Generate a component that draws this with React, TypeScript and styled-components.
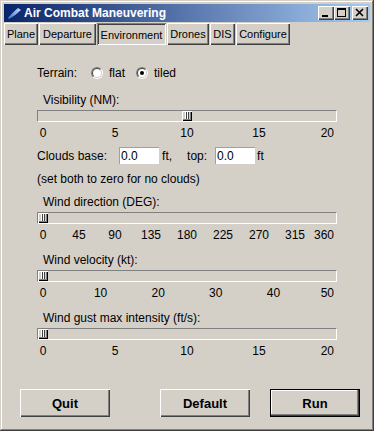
import React from 'react';
import styled, { createGlobalStyle, css } from 'styled-components';

const GlobalStyle = createGlobalStyle`
  html, body {
    margin: 0;
    padding: 0;
    background: #d4d0c8;
  }
  body {
    font-family: "Liberation Sans", Arial, sans-serif;
    font-size: 12px;
    color: #000;
  }
`;

const raised = css`
  box-shadow: inset 1px 1px #ffffff, inset -1px -1px #404040, inset -2px -2px #808080;
`;

const sunken = css`
  box-shadow: inset 1px 1px #808080, inset -1px -1px #ffffff, inset 2px 2px #404040, inset -2px -2px #d4d0c8;
`;

const Window = styled.div`
  box-sizing: border-box;
  width: 374px;
  height: 431px;
  padding: 4px;
  background: #d4d0c8;
  box-shadow: inset -1px -1px #404040, inset 1px 1px #d4d0c8, inset -2px -2px #808080, inset 2px 2px #ffffff;
  display: flex;
  flex-direction: column;
`;

const TitleBar = styled.div`
  height: 18px;
  display: flex;
  align-items: center;
  padding: 0 2px;
  background: linear-gradient(to right, #0a246a, #a6caf0);
  color: #fff;
  font-weight: bold;
  font-size: 12px;
`;

const TitleText = styled.span`
  flex: 1;
  margin-left: 2px;
  white-space: nowrap;
`;

const TitleButton = styled.div<{ $gap?: number }>`
  box-sizing: border-box;
  width: 16px;
  height: 14px;
  margin-left: ${p => p.$gap ?? 0}px;
  background: #d4d0c8;
  ${raised}
  display: flex;
`;

const TabRow = styled.div`
  display: flex;
  gap: 1px;
  margin-top: 1px;
  height: 22px;
`;

const Tab = styled.div<{ $active?: boolean; $w: number }>`
  box-sizing: border-box;
  width: ${p => p.$w}px;
  height: 22px;
  display: flex;
  align-items: center;
  justify-content: center;
  font-size: 11px;
  white-space: nowrap;
  ${p => (p.$active ? sunken : raised)}
  ${p => p.$active && 'padding-top: 2px;'}
`;

const Panel = styled.div`
  flex: 1;
  display: flex;
  flex-direction: column;
`;

const Controls = styled.div`
  display: flex;
  flex-direction: column;
  padding: 18px 0 0 33px;
`;

const Row = styled.div<{ $h: number; $mt?: number }>`
  display: flex;
  align-items: center;
  height: ${p => p.$h}px;
  margin-top: ${p => p.$mt ?? 0}px;
  white-space: nowrap;
`;

const Text = styled.span<{ $ml?: number }>`
  margin-left: ${p => p.$ml ?? 0}px;
`;

const RadioOuter = styled.span<{ $ml?: number }>`
  box-sizing: border-box;
  width: 12px;
  height: 12px;
  margin-left: ${p => p.$ml ?? 0}px;
  border-radius: 50%;
  border: 1px solid;
  border-color: #808080 #ffffff #ffffff #808080;
  display: flex;
`;

const RadioInner = styled.span`
  box-sizing: border-box;
  flex: 1;
  border-radius: 50%;
  border: 1px solid;
  border-color: #404040 #d4d0c8 #d4d0c8 #404040;
  background: #fff;
  display: flex;
  align-items: center;
  justify-content: center;
`;

const RadioDot = styled.span`
  width: 4px;
  height: 4px;
  border-radius: 50%;
  background: #000;
`;

const Entry = styled.div<{ $ml?: number }>`
  box-sizing: border-box;
  width: 40px;
  height: 17px;
  margin-left: ${p => p.$ml ?? 0}px;
  padding-left: 2px;
  background: #fff;
  display: flex;
  align-items: center;
  box-shadow: inset 1px 1px #a0a0a0;
`;

const ScaleBlock = styled.div<{ $mt: number }>`
  display: flex;
  flex-direction: column;
  width: 300px;
  margin-top: ${p => p.$mt}px;
`;

const ScaleLabel = styled.div`
  height: 16px;
  line-height: 16px;
  margin-left: 6px;
  margin-bottom: 2px;
  white-space: nowrap;
`;

const Trough = styled.div`
  box-sizing: border-box;
  position: relative;
  width: 300px;
  height: 12px;
  border: 1px solid;
  border-color: #808080 #ffffff #ffffff #808080;
`;

const Thumb = styled.div`
  position: absolute;
  top: 0;
  box-sizing: border-box;
  width: 10px;
  height: 10px;
  background:
    linear-gradient(
      to right,
      transparent 3px,
      #ffffff 3px, #ffffff 4px,
      #404040 4px, #404040 5px,
      #ffffff 5px, #ffffff 6px,
      #404040 6px, #404040 7px,
      transparent 7px
    ),
    #d4d0c8;
  box-shadow: inset 1px 1px #ffffff, inset -1px -1px #000000, inset -2px -2px #808080;
`;

const TickRow = styled.div`
  position: relative;
  height: 18px;
  margin-top: 2px;
`;

const Tick = styled.span<{ $last?: boolean }>`
  position: absolute;
  top: 0;
  line-height: 18px;
  white-space: nowrap;
  ${p => (p.$last ? 'right: 3px;' : 'transform: translateX(-50%);')}
`;

const ButtonRow = styled.div`
  margin-top: auto;
  display: flex;
  padding: 0 0 10px 16px;
`;

const PushButton = styled.div<{ $ml?: number; $default?: boolean }>`
  box-sizing: border-box;
  width: 90px;
  height: 28px;
  margin-left: ${p => p.$ml ?? 0}px;
  display: flex;
  align-items: center;
  justify-content: center;
  font-weight: bold;
  font-size: 13px;
  ${p =>
    p.$default
      ? 'box-shadow: inset 0 0 0 1px #000000, inset -2px -2px #404040, inset -3px -3px #808080, inset 2px 2px #ffffff;'
      : 'box-shadow: inset 1px 1px #ffffff, inset -1px -1px #404040, inset -2px -2px #808080;'}
`;

const Radio = ({ checked, ml }: { checked?: boolean; ml?: number }) => (
  <RadioOuter $ml={ml}>
    <RadioInner>{checked && <RadioDot />}</RadioInner>
  </RadioOuter>
);

const TRACK = 288;

const Scale = ({
  label,
  max,
  value,
  ticks,
  mt,
}: {
  label: string;
  max: number;
  value: number;
  ticks: number[];
  mt: number;
}) => (
  <ScaleBlock $mt={mt}>
    <ScaleLabel>{label}</ScaleLabel>
    <Trough>
      <Thumb style={{ left: (value / max) * TRACK }} />
    </Trough>
    <TickRow>
      {ticks.map((t, i) =>
        i === ticks.length - 1 ? (
          <Tick key={t} $last>
            {t}
          </Tick>
        ) : (
          <Tick key={t} style={{ left: 6 + (t / max) * TRACK }}>
            {t}
          </Tick>
        )
      )}
    </TickRow>
  </ScaleBlock>
);

const tabs = [
  { name: 'Plane', w: 34 },
  { name: 'Departure', w: 57 },
  { name: 'Environment', w: 69, active: true },
  { name: 'Drones', w: 42 },
  { name: 'DIS', w: 25 },
  { name: 'Configure', w: 54 },
];

const App = () => {
  return (
    <>
      <GlobalStyle />
      <Window>
        <TitleBar>
          <svg width="16" height="16" viewBox="0 0 16 16">
            <defs>
              <linearGradient id="quill" x1="0" y1="1" x2="1" y2="0">
                <stop offset="0" stopColor="#3a6fd0" />
                <stop offset="1" stopColor="#c8e0fc" />
              </linearGradient>
            </defs>
            <path d="M2 13 Q7 7 12 3 L15 5 Q9 11 3 14 Z" fill="url(#quill)" />
          </svg>
          <TitleText>Air Combat Maneuvering</TitleText>
          <TitleButton>
            <svg width="16" height="14" viewBox="0 0 16 14">
              <rect x="4" y="9" width="6" height="2" fill="#000" />
            </svg>
          </TitleButton>
          <TitleButton>
            <svg width="16" height="14" viewBox="0 0 16 14">
              <rect x="3.5" y="2.5" width="8" height="8" fill="none" stroke="#000" />
              <rect x="3" y="2" width="9" height="2" fill="#000" />
            </svg>
          </TitleButton>
          <TitleButton $gap={2}>
            <svg width="16" height="14" viewBox="0 0 16 14">
              <path d="M4 3 L11 10 M11 3 L4 10" stroke="#000" strokeWidth="1.6" />
            </svg>
          </TitleButton>
        </TitleBar>
        <TabRow>
          {tabs.map(t => (
            <Tab key={t.name} $w={t.w} $active={t.active}>
              {t.name}
            </Tab>
          ))}
        </TabRow>
        <Panel>
          <Controls>
            <Row $h={20}>
              <Text>Terrain:</Text>
              <Radio ml={14} />
              <Text $ml={6}>flat</Text>
              <Radio ml={11} checked />
              <Text $ml={6}>tiled</Text>
            </Row>
            <Scale label="Visibility (NM):" max={20} value={10} ticks={[0, 5, 10, 15, 20]} mt={9} />
            <Row $h={17} $mt={5}>
              <Text>Clouds base:</Text>
              <Entry $ml={12}>0.0</Entry>
              <Text $ml={3}>ft,</Text>
              <Text $ml={15}>top:</Text>
              <Entry $ml={8}>0.0</Entry>
              <Text $ml={2}>ft</Text>
            </Row>
            <Row $h={16} $mt={7}>
              <Text>(set both to zero for no clouds)</Text>
            </Row>
            <Scale
              label="Wind direction (DEG):"
              max={360}
              value={0}
              ticks={[0, 45, 90, 135, 180, 225, 270, 315, 360]}
              mt={7}
            />
            <Scale label="Wind velocity (kt):" max={50} value={0} ticks={[0, 10, 20, 30, 40, 50]} mt={8} />
            <Scale label="Wind gust max intensity (ft/s):" max={20} value={0} ticks={[0, 5, 10, 15, 20]} mt={8} />
          </Controls>
          <ButtonRow>
            <PushButton>Quit</PushButton>
            <PushButton $ml={50}>Default</PushButton>
            <PushButton $ml={20} $default>
              Run
            </PushButton>
          </ButtonRow>
        </Panel>
      </Window>
    </>
  );
};

export default App;
